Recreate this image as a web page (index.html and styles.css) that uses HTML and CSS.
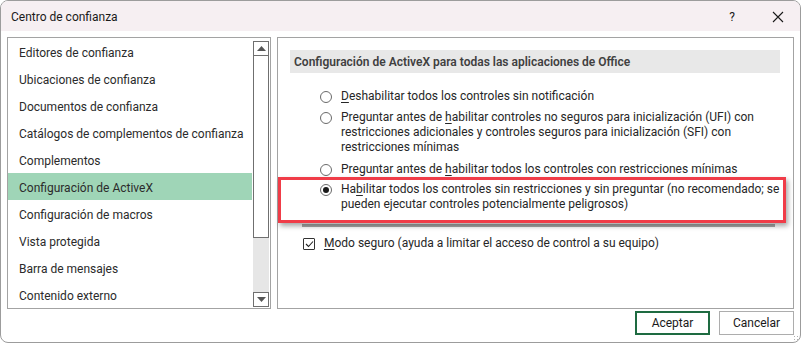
FILE: index.html
```html
<!DOCTYPE html>
<html lang="es">
<head>
<meta charset="utf-8">
<title>Centro de confianza</title>
<link rel="stylesheet" href="styles.css">
</head>
<body>
<div class="window">
  <div class="titlebar">
    <span class="title">Centro de confianza</span>
    <span class="help">?</span>
    <span class="close">
      <svg width="12" height="12" viewBox="0 0 12 12"><path d="M1 1L11 11M11 1L1 11" stroke="#1a1a1a" stroke-width="1.1" fill="none"/></svg>
    </span>
  </div>
  <div class="content">
    <div class="list">
      <ul class="items">
        <li>Editores de confianza</li>
        <li>Ubicaciones de confianza</li>
        <li>Documentos de confianza</li>
        <li>Catálogos de complementos de confianza</li>
        <li>Complementos</li>
        <li class="selected">Configuración de ActiveX</li>
        <li>Configuración de macros</li>
        <li>Vista protegida</li>
        <li>Barra de mensajes</li>
        <li>Contenido externo</li>
      </ul>
      <div class="scrollbar">
        <div class="sb-btn"><svg width="9" height="5" viewBox="0 0 9 5"><path d="M0 5L4.5 0L9 5Z" fill="#555"/></svg></div>
        <div class="sb-thumb"></div>
        <div class="sb-track"></div>
        <div class="sb-btn"><svg width="9" height="5" viewBox="0 0 9 5"><path d="M0 0L4.5 5L9 0Z" fill="#555"/></svg></div>
      </div>
    </div>
    <div class="panel">
      <div class="section-head">Configuración de ActiveX para todas las aplicaciones de Office</div>
      <div class="options">
        <div class="opt opt1">
          <span class="radio"></span>
          <span class="label"><u>D</u>eshabilitar todos los controles sin notificación</span>
        </div>
        <div class="opt opt2">
          <span class="radio"></span>
          <span class="label">Preguntar antes de <u>h</u>abilitar controles no seguros para inicialización (UFI) con<br>restricciones adicionales y controles seguros para inicialización (SFI) con<br>restricciones mínimas</span>
        </div>
        <div class="opt opt3">
          <span class="radio"></span>
          <span class="label">Preguntar antes de <u>h</u>abilitar todos los controles con restricciones mínimas</span>
        </div>
        <div class="opt opt4">
          <span class="radio checked"></span>
          <span class="label">Ha<u>b</u>ilitar todos los controles sin restricciones y sin preguntar (no recomendado; se<br>pueden ejecutar controles potencialmente peligrosos)</span>
        </div>
      </div>
      <div class="sep"></div>
      <div class="check-row">
        <span class="checkbox"><svg width="9" height="8" viewBox="0 0 9 8"><path d="M1 4L3.5 6.5L8 1.5" stroke="#222" stroke-width="1.1" fill="none"/></svg></span>
        <span class="label"><u>M</u>odo seguro (ayuda a limitar el acceso de control a su equipo)</span>
      </div>
      <div class="highlight"></div>
    </div>
  </div>
  <div class="footer">
    <button class="btn primary">Aceptar</button>
    <button class="btn">Cancelar</button>
    <span class="grip"></span>
  </div>
</div>
</body>
</html>
```
FILE: styles.css
```css
* { box-sizing: border-box; }
html, body { margin: 0; padding: 0; background: #ffffff; }
body {
  font-family: Roboto, "Noto Sans", "DejaVu Sans", sans-serif;
  font-size: 12px;
  color: #262626;
}
.window {
  width: 801px;
  height: 343px;
  border: 1px solid #9c9c9c;
  border-radius: 8px 8px 8px 8px;
  overflow: hidden;
  background: #ffffff;
  position: relative;
}
.titlebar {
  height: 30px;
  background: #f6eff2;
  display: flex;
  align-items: center;
  padding: 2px 0 0 10px;
  color: #1a1a1a;
}
.title { flex: 1; font-size: 12px; }
.help { width: 20px; margin-right: 30px; text-align: center; font-size: 12px; }
.close { width: 14px; margin-right: 14px; display: flex; align-items: center; }
.content {
  display: flex;
  gap: 6px;
  padding: 6px 6px 0 6px;
  height: 278px;
}
.list {
  width: 264px;
  height: 272px;
  border: 1px solid #a3a3a3;
  display: flex;
}
.items {
  list-style: none;
  margin: 0;
  padding: 0;
  width: 244px;
}
.items li {
  height: 27px;
  padding-top: 3px;
  line-height: 24px;
  padding-left: 11px;
  white-space: nowrap;
  color: #2b2b2b;
}
.items li.selected { background: #9fd5b7; }
.scrollbar {
  width: 16px;
  margin-left: 1px;
  padding-top: 3px;
  display: flex;
  flex-direction: column;
}
.sb-btn {
  height: 15px;
  border: 1px solid #6f6f6f;
  background: #fff;
  display: flex;
  align-items: center;
  justify-content: center;
}
.sb-thumb {
  height: 182px;
  border: 1px solid #6f6f6f;
  border-top: none;
  background: #fff;
}
.sb-track { flex: 1; background: #e6e6e6; }
.scrollbar .sb-btn:last-child { margin-bottom: 1px; }
.panel {
  position: relative;
  width: 517px;
  height: 272px;
  border: 1px solid #a3a3a3;
  padding: 12px 0 0 12px;
}
.section-head {
  width: 490px;
  height: 23px;
  background: #e8e8e8;
  line-height: 24px;
  padding-left: 4px;
  font-weight: 600;
  color: #404040;
}
.options { padding: 16px 0 0 30px; }
.opt { display: flex; align-items: flex-start; }
.opt2 { margin-top: 6px; }
.opt3 { margin-top: 7px; }
.opt4 { margin-top: 5px; }
.opt .label { line-height: 15px; white-space: nowrap; }
.radio {
  width: 12px;
  height: 12px;
  border: 1px solid #6a6a6a;
  border-radius: 50%;
  margin: 2px 9px 0 0;
  flex: none;
  display: flex;
  align-items: center;
  justify-content: center;
}
.radio.checked::after {
  content: "";
  width: 6px;
  height: 6px;
  border-radius: 50%;
  background: #1a1a1a;
}
.sep {
  margin: 12px 0 0 12px;
  width: 473px;
  height: 3px;
  background: #a8a8a8;
  filter: blur(0.6px);
}
.check-row { display: flex; align-items: center; margin: 9px 0 0 13px; line-height: 15px; }
.checkbox {
  width: 12px;
  height: 12px;
  border: 1px solid #333;
  margin-right: 9px;
  display: flex;
  align-items: center;
  justify-content: center;
  border-radius: 1px;
}
.highlight {
  position: absolute;
  left: 0;
  top: 139px;
  width: 508px;
  height: 46px;
  border: 3px solid #f03c48;
  box-shadow: 2px 3px 5px rgba(0,0,0,0.35);
}
u { text-decoration: underline; text-underline-offset: 2px; }
.footer {
  display: flex;
  justify-content: flex-end;
  gap: 9px;
  padding: 2px 6px 0 0;
  position: relative;
}
.btn {
  width: 75px;
  height: 24px;
  font: inherit;
  color: #1a1a1a;
  background: #fff;
  border: 1px solid #adadad;
  padding: 0;
}
.btn.primary { border: 2px solid #1e6b41; }
.grip {
  position: absolute;
  right: 1px;
  bottom: -6px;
  width: 6px;
  height: 6px;
  background: radial-gradient(circle, #b0b0b0 0.8px, transparent 1px) 0 0 / 3px 3px;
}
```
